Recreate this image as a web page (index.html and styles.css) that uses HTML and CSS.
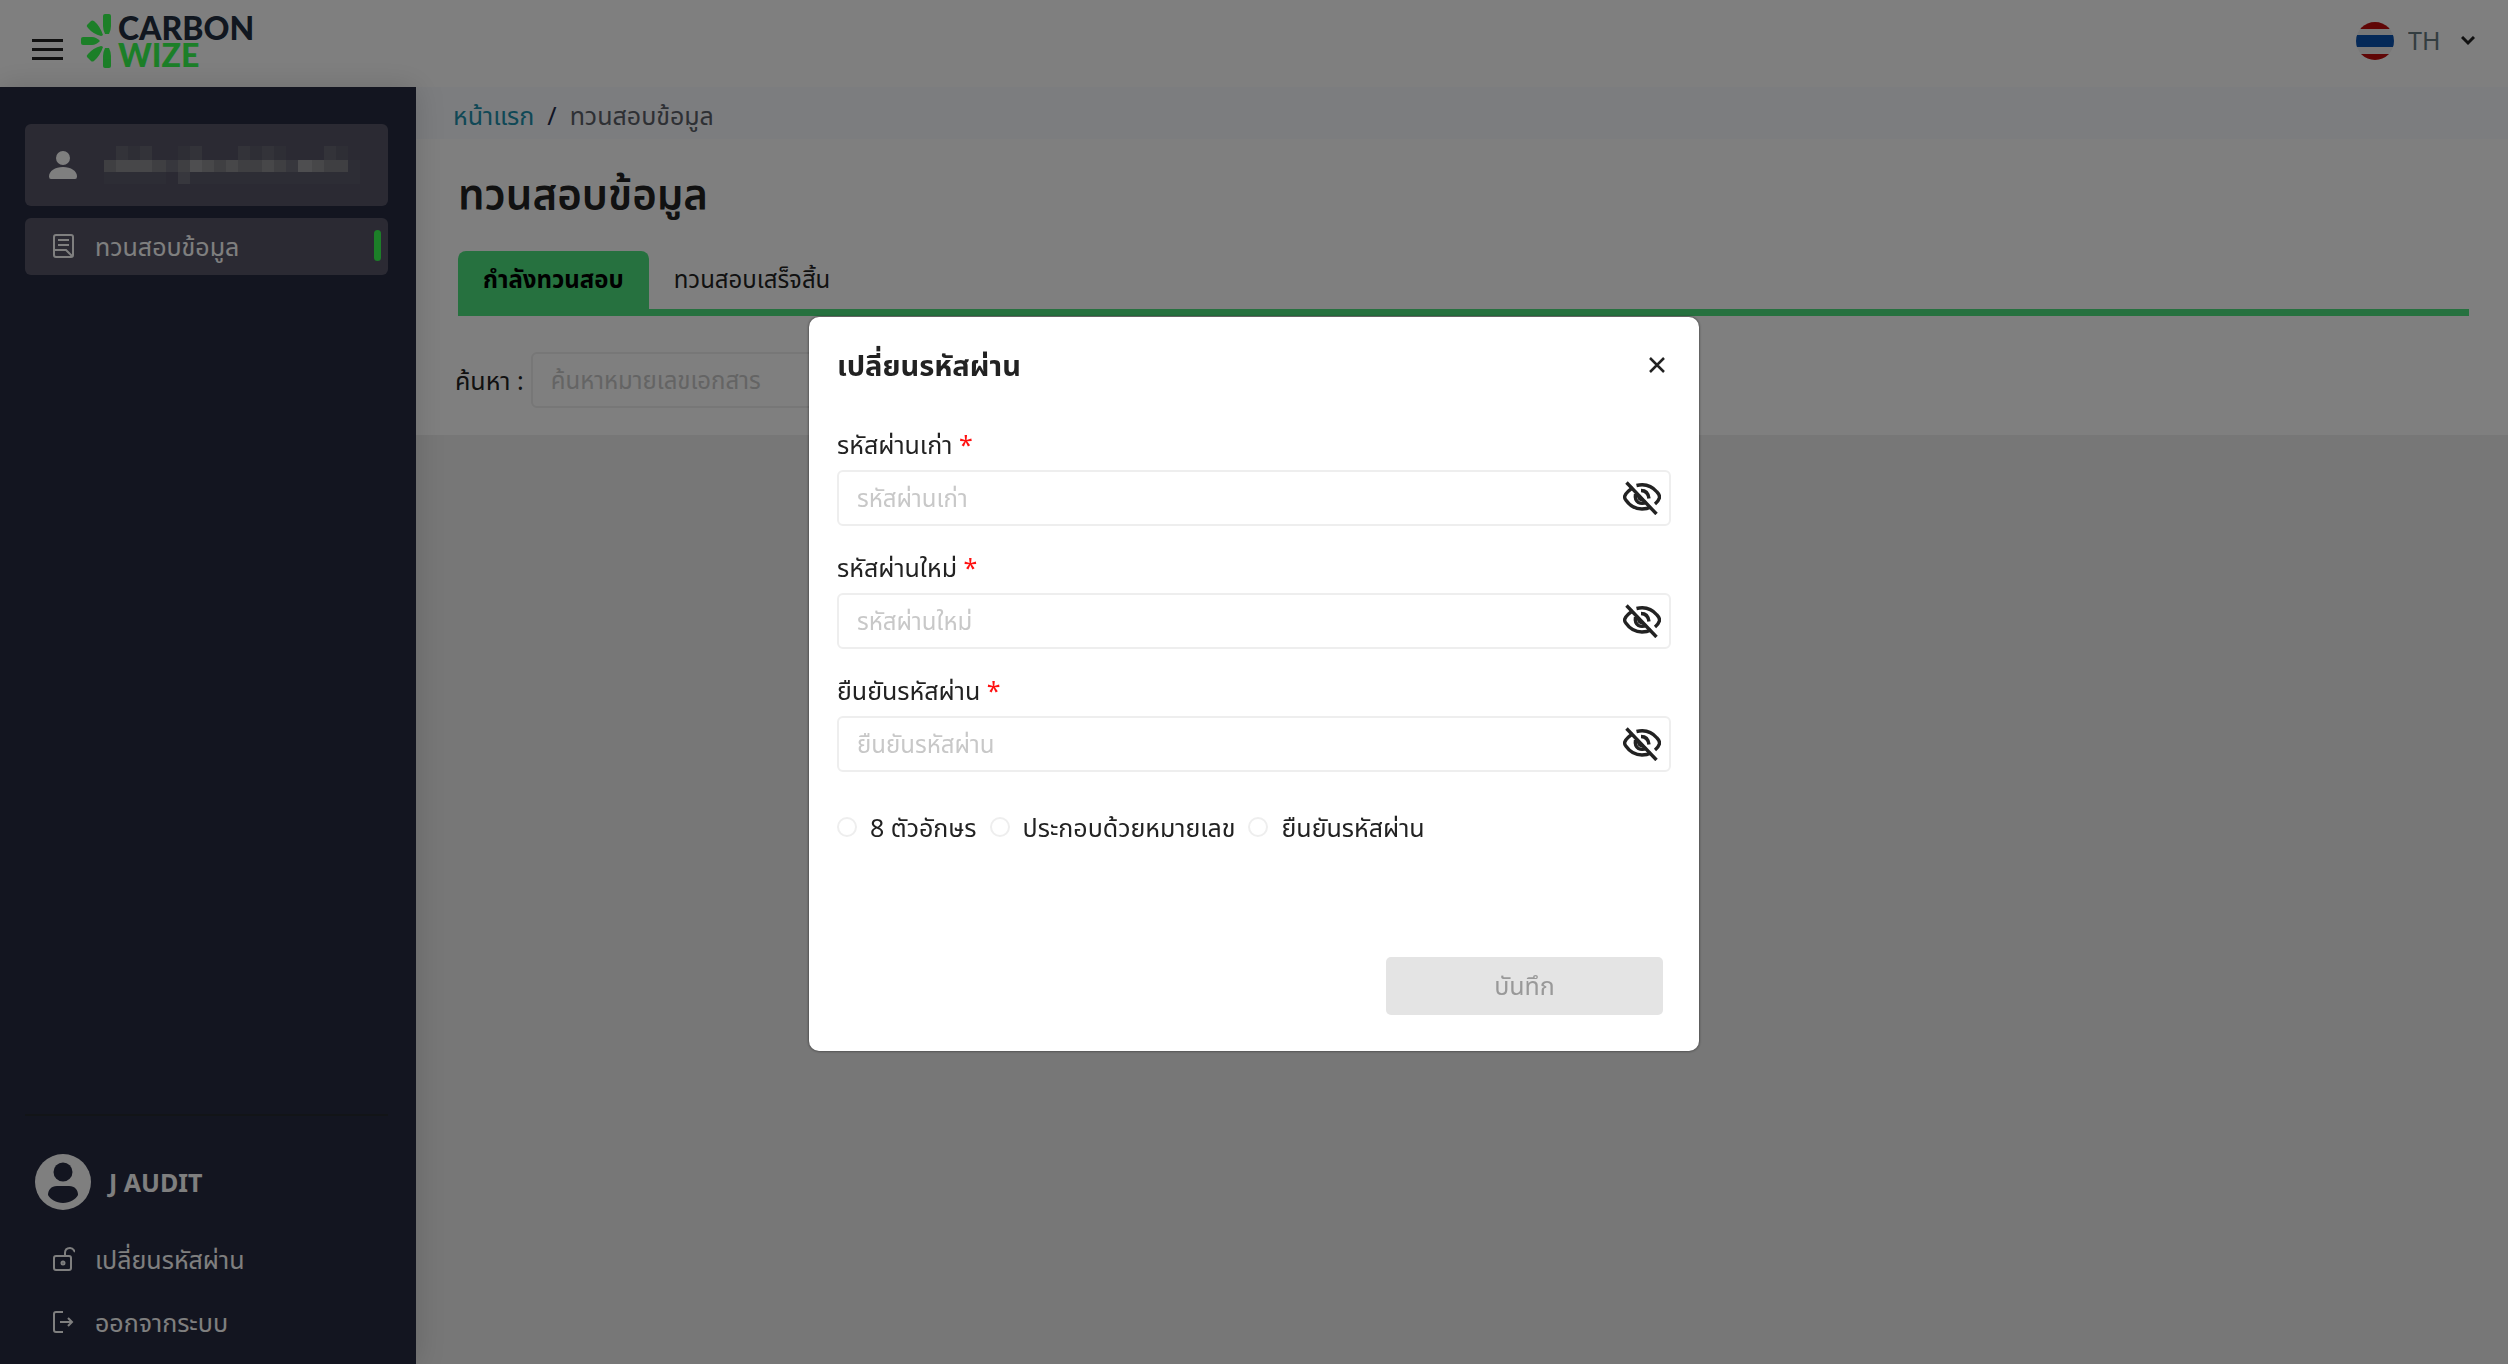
FILE: index.html
```html
<!DOCTYPE html>
<html lang="th">
<head>
<meta charset="utf-8">
<title>Carbon Wize – ทวนสอบข้อมูล</title>
<meta name="viewport" content="width=device-width, initial-scale=1">
<link rel="stylesheet" href="styles.css">
</head>
<body>
<div class="app">
  <header class="topbar">
    <button class="menu-button" type="button" aria-label="เมนู"><span></span><span></span><span></span></button>
    <a class="brand" href="#" aria-label="Carbon Wize">
      <svg class="brand-mark" viewBox="0 0 30 54" aria-hidden="true">
        <path d="M22 2q0-2 2-2h4q2 0 2 2v10q0 4-2 8h-4q-2-4-2-8z"/>
        <path d="M22 52q0 2 2 2h4q2 0 2-2V42q0-4-2-8h-4q-2 4-2 8z"/>
        <path d="M0 25q0-2 2-2h9q4 0 8 4-4 4-8 4H2q-2 0-2-2z"/>
        <path d="M6 11l4-4q1-1 3 0 6 5 9 14-1 1-2 1-8-2-13-8-2-2-1-3z"/>
        <path d="M6 43l4 4q1 1 3 0 6-5 9-14-1-1-2-1-8 2-13 8-2 2-1 3z"/>
      </svg>
      <span class="brand-name"><span>CARBON</span><span class="brand-accent">WIZE</span></span>
    </a>
    <div class="language">
      <svg class="flag" viewBox="0 0 38 38" aria-hidden="true">
        <clipPath id="flag-clip"><circle cx="19" cy="19" r="19"/></clipPath>
        <g clip-path="url(#flag-clip)">
          <path fill="#f0f0f0" d="M0 0h38v38H0z"/>
          <path fill="#c00c0c" d="M0 0h38v7H0zM0 32h38v6H0z"/>
          <path fill="#0b52b0" d="M0 13h38v12H0z"/>
        </g>
      </svg>
      <select class="language-select" aria-label="ภาษา"><option>TH</option></select>
      <svg class="chevron" viewBox="0 0 14 10" aria-hidden="true"><path d="M1 1l6 6 6-6"/></svg>
    </div>
  </header>

  <div class="body">
    <aside class="sidebar">
      <div class="company">
        <svg class="person" viewBox="0 0 28 28" aria-hidden="true"><circle cx="14" cy="7" r="7"/><path d="M0 25.500C0 20 6 16 14 16s14 4 14 9.500Q28 28 26 28H2q-2 0-2-2.500z"/></svg>
        <svg class="redacted" viewBox="0 0 256 38" shape-rendering="crispEdges" aria-hidden="true">
          <path fill="#5b5b6a" d="M0 26h62v12H0zM86 26h170v12H86zM244 14h12v12h-12z"/>
          <path fill="#666673" d="M12 0h12v14H12zM36 0h12v14H36zM86 0h12v14H86zM134 0h12v14h-12zM158 0h12v14h-12zM220 0h12v14h-12z"/>
          <path fill="#5d5d6b" d="M24 0h12v14H24zM74 0h12v14H74zM146 0h12v14h-12zM170 0h12v14h-12zM232 0h12v14h-12z"/>
          <path fill="#7e7e84" d="M0 14h12v12H0zM48 14h14v12H48zM74 14h12v12H74zM110 14h12v12h-12zM134 14h24v12h-24zM170 14h12v12h-12zM220 14h24v12h-24z"/>
          <path fill="#6e6e7a" d="M62 14h12v12H62zM182 14h12v12h-12zM74 26h12v12H74z"/>
          <path fill="#8e8e92" d="M12 14h36v12H12zM98 14h12v12H98zM122 14h12v12h-12zM158 14h12v12h-12zM208 14h12v12h-12z"/>
          <path fill="#9c9ca0" d="M86 14h12v12H86zM194 14h14v12h-14z"/>
        </svg>
      </div>
      <nav class="side-nav">
        <a class="side-link is-active" href="#">
          <svg class="side-icon" viewBox="0 0 22 24" aria-hidden="true"><path d="M3 1h15q2 0 2 2v18q0 2-2 2H3q-2 0-2-2V3q0-2 2-2zM5 6h11M5 11h11M1 16h12l6 6"/></svg>
          ทวนสอบข้อมูล
        </a>
      </nav>
      <div class="account">
        <div class="account-user">
          <svg class="avatar" viewBox="0 0 56 56" aria-hidden="true"><circle cx="28" cy="28" r="28" fill="#fff"/><g fill="#262a40"><circle cx="28" cy="18" r="9.500"/><path d="M13 41c0-5 3-9 9-9h12c6 0 9 4 9 9-2 4-8 8-15 8s-13-4-15-8z"/></g></svg>
          <strong>J AUDIT</strong>
        </div>
        <a class="side-link" href="#">
          <svg class="side-icon" viewBox="0 0 22 24" aria-hidden="true"><path d="M3 9h13q2 0 2 2v10q0 2-2 2H3q-2 0-2-2V11q0-2 2-2zM12 9V6q0-5 5-5 3 0 5 4"/><circle cx="10" cy="16" r="1.500"/></svg>
          เปลี่ยนรหัสผ่าน
        </a>
        <a class="side-link" href="#">
          <svg class="side-icon" viewBox="0 0 22 24" aria-hidden="true"><path d="M10 2H3Q1 2 1 4v16q0 2 2 2h7M7 12h12M15 8l4 4-4 4"/></svg>
          ออกจากระบบ
        </a>
      </div>
    </aside>

    <main class="content">
      <nav class="breadcrumb" aria-label="เส้นทาง"><a href="#">หน้าแรก</a><span>/</span><span class="current">ทวนสอบข้อมูล</span></nav>
      <section class="panel">
        <h1>ทวนสอบข้อมูล</h1>
        <div class="tabs" role="tablist">
          <button class="tab is-active" type="button" role="tab" aria-selected="true">กำลังทวนสอบ</button>
          <button class="tab" type="button" role="tab" aria-selected="false">ทวนสอบเสร็จสิ้น</button>
        </div>
        <div class="search">
          <label for="search">ค้นหา :</label>
          <input class="text-input" id="search" type="text" placeholder="ค้นหาหมายเลขเอกสาร">
        </div>
      </section>
    </main>
  </div>
</div>

<div class="backdrop">
  <form class="modal" role="dialog" aria-modal="true" aria-labelledby="modal-title">
    <div class="modal-head">
      <h2 id="modal-title">เปลี่ยนรหัสผ่าน</h2>
      <button class="close" type="button" aria-label="ปิด"><svg viewBox="0 0 16 16" aria-hidden="true"><path d="M1 1l14 14M15 1L1 15"/></svg></button>
    </div>
    <div class="field">
      <label for="old">รหัสผ่านเก่า <span class="required">*</span></label>
      <div class="password">
        <input class="text-input" id="old" type="password" placeholder="รหัสผ่านเก่า">
        <button class="reveal" type="button" aria-label="แสดงรหัสผ่าน"><svg viewBox="0 0 38 34" aria-hidden="true"><use href="#eye-off"/></svg></button>
      </div>
    </div>
    <div class="field">
      <label for="new">รหัสผ่านใหม่ <span class="required">*</span></label>
      <div class="password">
        <input class="text-input" id="new" type="password" placeholder="รหัสผ่านใหม่">
        <button class="reveal" type="button" aria-label="แสดงรหัสผ่าน"><svg viewBox="0 0 38 34" aria-hidden="true"><use href="#eye-off"/></svg></button>
      </div>
    </div>
    <div class="field">
      <label for="confirm">ยืนยันรหัสผ่าน <span class="required">*</span></label>
      <div class="password">
        <input class="text-input" id="confirm" type="password" placeholder="ยืนยันรหัสผ่าน">
        <button class="reveal" type="button" aria-label="แสดงรหัสผ่าน"><svg viewBox="0 0 38 34" aria-hidden="true"><use href="#eye-off"/></svg></button>
      </div>
    </div>
    <div class="rules">
      <label><input type="radio" name="length">8 ตัวอักษร</label>
      <label><input type="radio" name="digits">ประกอบด้วยหมายเลข</label>
      <label><input type="radio" name="match">ยืนยันรหัสผ่าน</label>
    </div>
    <div class="modal-foot"><button class="save" type="submit" disabled>บันทึก</button></div>
  </form>
</div>

<svg class="sprite" aria-hidden="true">
  <symbol id="eye-off" viewBox="0 0 38 34">
    <g fill="none" stroke="#222" stroke-width="3.400">
      <path d="M10 7Q4 10 1.800 15q-.6 2 1 4C7 25 13 28 19 28q5 0 9-2"/>
      <path d="M13.500 4.500Q26 1.500 34 11q3 3 2.400 6-.8 3-4.400 6"/>
      <path d="M12.500 13q-1 6 3 8.500 4 2 8-.5M18 9.500q7 0 8 8"/>
      <path d="M15.500 14q0 5 5 5"/>
      <path d="M3.500 1.500l30 31.500"/>
    </g>
  </symbol>
</svg>
</body>
</html>
```

FILE: styles.css
```css
* { box-sizing: border-box; }

body {
  margin: 0;
  color: #222;
  background: #eee;
  font-family: "Noto Sans", "Noto Sans Thai", sans-serif;
  font-size: 25px;
  line-height: 36px;
}

a { color: inherit; text-decoration: none; }
button, input, select { font: inherit; color: inherit; }
button { padding: 0; border: 0; background: none; }
svg { display: block; flex: none; }
.sprite { position: absolute; width: 0; height: 0; }

.app { display: flex; flex-direction: column; min-height: 100vh; }

.topbar {
  display: flex;
  align-items: center;
  height: 87px;
  padding: 0 32px;
  background: #fff;
}
.menu-button { display: grid; gap: 6px; margin-top: 12px; }
.menu-button span { width: 31px; height: 3px; background: #222; }
.brand { display: flex; align-items: center; gap: 7px; margin: -6px 0 0 18px; }
.brand-mark { width: 30px; height: 54px; fill: #38fe50; }
.brand-name {
  display: grid;
  color: #222f40;
  font-family: Lato, sans-serif;
  font-size: 32px;
  font-weight: 900;
  line-height: 27px;
}
.brand-accent { color: #38fe50; }
.language { display: flex; align-items: center; margin-left: auto; margin-top: -6px; }
.flag { width: 38px; height: 38px; }
.language-select {
  margin-left: 14px;
  padding: 0 0 2px;
  border: 0;
  color: #667a80;
  background: none;
  appearance: none;
}
.chevron { width: 14px; height: 10px; margin: 0 1px 0 20px; fill: none; stroke: #222; stroke-width: 3; }

.body { display: flex; flex: 1; }

.sidebar {
  position: relative;
  display: flex;
  flex-direction: column;
  width: 416px;
  padding: 37px 28px 10px 25px;
  color: #fff;
  background: #262a40;
  box-shadow: 0 0 28px rgba(0, 0, 0, .15);
}
.company {
  display: flex;
  align-items: center;
  gap: 27px;
  height: 82px;
  margin-bottom: 12px;
  padding-left: 24px;
  border-radius: 6px;
  background: #565567;
}
.person { width: 28px; height: 28px; fill: #fff; }
.redacted { width: 256px; height: 38px; }
.side-link {
  display: flex;
  align-items: center;
  gap: 20px;
  height: 63px;
  padding: 0 7px 2px 28px;
  border-radius: 6px;
}
.side-link.is-active { height: 57px; background: #565567; }
.side-link.is-active::after {
  content: "";
  width: 7px;
  height: 31px;
  margin-left: auto;
  border-radius: 4px;
  background: #38fe50;
}
.side-icon { width: 22px; height: 24px; fill: none; stroke: #fff; stroke-width: 2; }
.account { margin-top: auto; border-top: 2px solid #24282e; }
.account-user { display: flex; align-items: center; gap: 18px; padding: 38px 10px 18px; }
.avatar { width: 56px; height: 56px; }

.content { flex: 1; min-width: 0; }
.breadcrumb {
  display: flex;
  gap: 13px;
  padding: 10px 37px 6px;
  color: #222a48;
  background: #f8fafe;
}
.breadcrumb a { color: #2090ac; }
.breadcrumb .current { color: #5c6068; }
.panel { padding: 24px 39px 27px 42px; background: #fff; }
h1 { margin: 0; font-size: 42px; font-weight: 600; line-height: 60px; }
.tabs { display: flex; margin-top: 28px; border-bottom: 7px solid #4ce27e; }
.tab { height: 58px; padding: 0 25px 2px; font-size: 24px; }
.tab.is-active { color: #000; font-weight: 700; border-radius: 8px 8px 0 0; background: #4ce27e; }
.search { display: flex; align-items: center; gap: 7px; margin: 36px 0 0 -3px; }
.text-input {
  height: 56px;
  padding: 0 18px 2px;
  border: 2px solid #eee;
  border-radius: 6px;
  background: #fff;
  font-size: 24px;
}
.text-input::placeholder { color: #c8c8c8; opacity: 1; }
.search .text-input { width: 440px; }

.backdrop {
  position: fixed;
  inset: 0;
  display: flex;
  align-items: center;
  justify-content: center;
  padding-top: 4px;
  background: rgba(0, 0, 0, .5);
}
.modal {
  width: 890px;
  padding: 26px 28px 36px;
  border-radius: 10px;
  background: #fff;
  box-shadow: 0 0 3px rgba(0, 0, 0, .6);
}
.modal-head { display: flex; align-items: center; justify-content: space-between; margin-bottom: 39px; }
h2 { margin: 0; font-size: 29px; font-weight: 700; line-height: 44px; }
.close { padding: 6px; }
.close svg { width: 16px; height: 16px; fill: none; stroke: #222; stroke-width: 2.5; }
.field { margin-bottom: 23px; }
.field label { display: block; margin-bottom: 8px; }
.required { color: #f11; }
.password { display: grid; align-items: center; }
.password > * { grid-area: 1 / 1; }
.password .text-input { width: 100%; padding-right: 60px; }
.reveal { justify-self: end; margin-right: 10px; }
.reveal svg { width: 38px; height: 34px; }
.rules { display: flex; gap: 13px; margin-top: 37px; }
.rules label { display: flex; align-items: center; gap: 13px; }
.rules input {
  width: 20px;
  height: 20px;
  margin: 0;
  border: 2px solid #eee;
  border-radius: 50%;
  appearance: none;
}
.modal-foot { display: flex; justify-content: flex-end; margin-top: 112px; padding-right: 8px; }
.save { width: 277px; height: 58px; padding-bottom: 2px; border-radius: 5px; color: #999; background: #e4e4e4; }
```
